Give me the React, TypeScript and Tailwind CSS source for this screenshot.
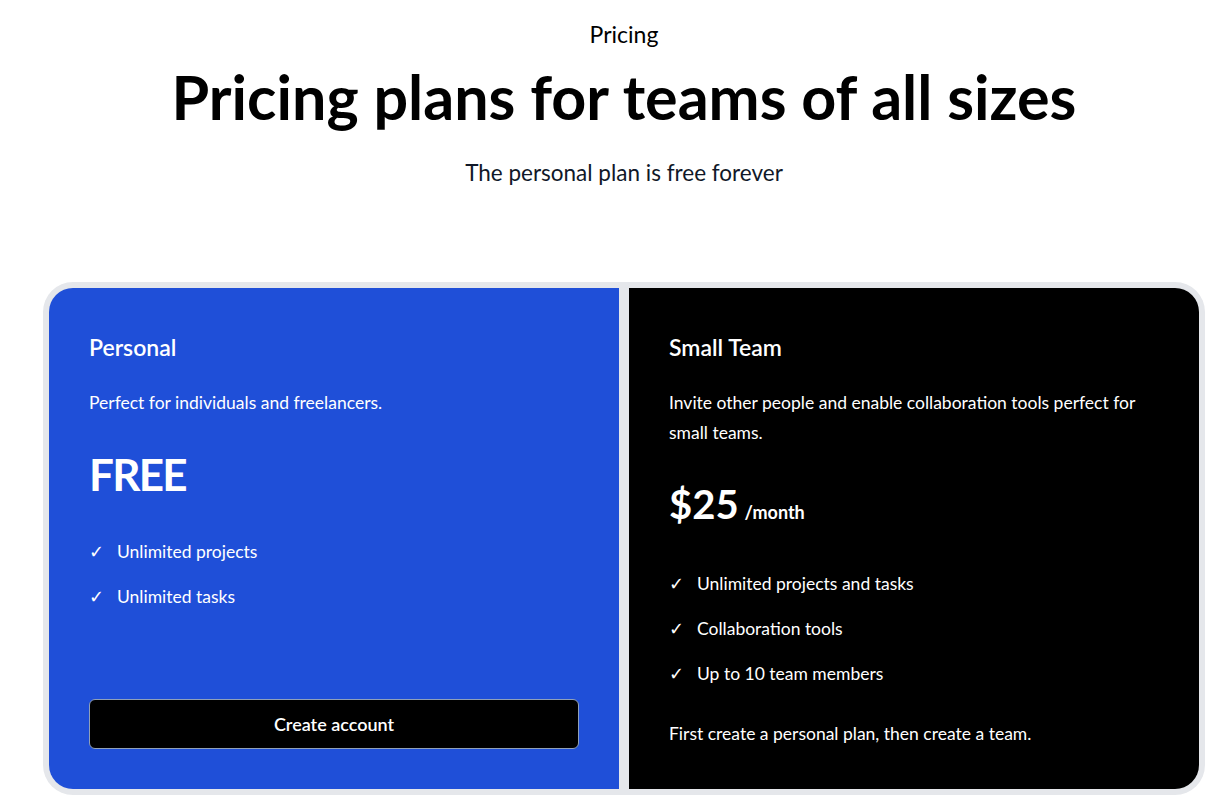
const personalFeatures = ["Unlimited projects", "Unlimited tasks"];
const teamFeatures = [
  "Unlimited projects and tasks",
  "Collaboration tools",
  "Up to 10 team members",
];

function Feature({ label }: { label: string }) {
  return (
    <li className="flex items-center text-[17.5px] leading-6">
      <span className="w-7 font-['DejaVu_Sans',sans-serif] text-[18px] leading-6">✓</span>
      <span>{label}</span>
    </li>
  );
}

export default function App() {
  return (
    <div className="min-h-screen bg-white pl-[17px] font-['Lato',sans-serif] text-black">
      <header className="flex flex-col items-center pt-5 text-center">
        <p className="text-[23px] leading-7">Pricing</p>
        <h1 className="mt-[18px] text-[61px] leading-none font-bold">
          Pricing plans for teams of all sizes
        </h1>
        <p className="mt-8 text-[22.5px] leading-7 text-gray-900">
          The personal plan is free forever
        </p>
      </header>

      <section className="mx-[26px] mt-[95px] rounded-[30px] bg-gray-200 p-1.5">
        <div className="grid grid-cols-2 gap-2.5 overflow-hidden rounded-3xl text-white">
          <article className="flex flex-col bg-[#1f4fd8] px-10 pt-[43px] pb-10">
            <h2 className="text-[23px] leading-8 font-semibold">Personal</h2>
            <p className="mt-[25px] text-[17.5px] leading-[30px]">
              Perfect for individuals and freelancers.
            </p>
            <p className="mt-[34px] text-[44px] leading-none font-bold tracking-[-0.04em]">
              FREE
            </p>
            <ul className="mt-11 flex flex-col gap-[21px]">
              {personalFeatures.map((f) => (
                <Feature key={f} label={f} />
              ))}
            </ul>
            <button className="mt-auto h-[50px] w-full rounded-md border border-slate-400 bg-black text-lg font-semibold text-white">
              Create account
            </button>
          </article>

          <article className="flex flex-col bg-black px-10 pt-[43px] pb-[43px]">
            <h2 className="text-[23px] leading-8 font-semibold">Small Team</h2>
            <p className="mt-[25px] text-[17.5px] leading-[30px]">
              Invite other people and enable collaboration tools perfect for
              small teams.
            </p>
            <p className="mt-9 flex items-baseline gap-1.5">
              <span className="text-[40px] leading-none font-bold">$25</span>
              <span className="text-lg font-bold">/month</span>
            </p>
            <ul className="mt-[46px] flex flex-col gap-[21px]">
              {teamFeatures.map((f) => (
                <Feature key={f} label={f} />
              ))}
            </ul>
            <p className="mt-9 text-[17.5px] leading-6">
              First create a personal plan, then create a team.
            </p>
          </article>
        </div>
      </section>
    </div>
  );
}
